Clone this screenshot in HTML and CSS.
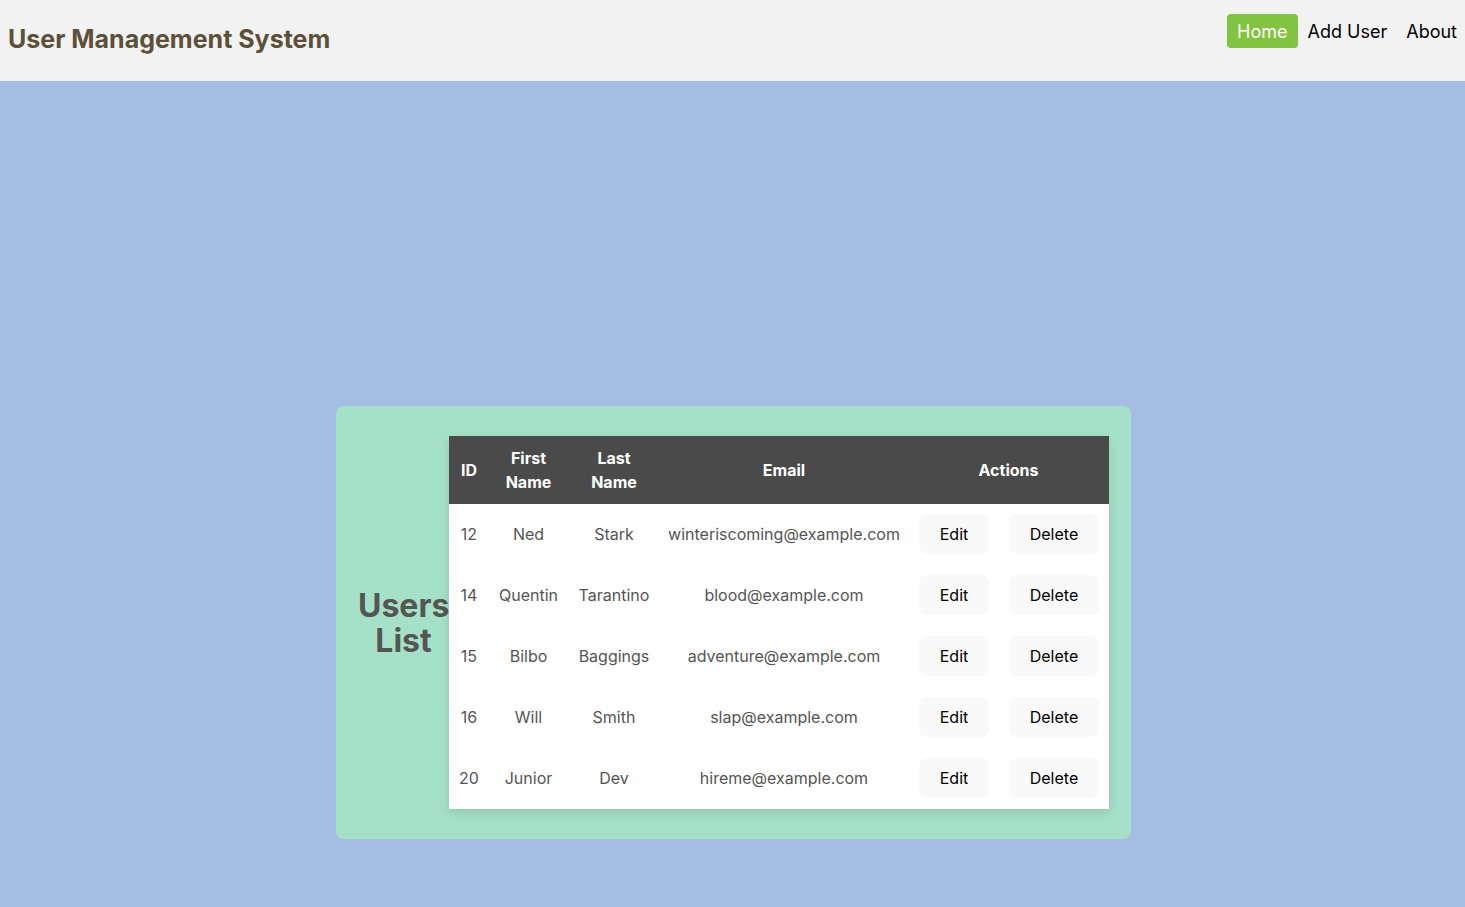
FILE: index.html
```html
<!DOCTYPE html>
<html>
<head>
<meta charset="utf-8">
<link rel="stylesheet" href="styles.css">
</head>
<body>
<header class="topbar">
  <h1 class="brand">User Management System</h1>
  <nav class="nav">
    <a class="nav-link active" href="#">Home</a>
    <a class="nav-link" href="#">Add User</a>
    <a class="nav-link" href="#">About</a>
  </nav>
</header>
<main class="main">
  <section class="card">
    <h2 class="card-title">Users<br>List</h2>
    <table class="users">
      <colgroup>
        <col class="c-id"><col class="c-first"><col class="c-last"><col class="c-email"><col class="c-edit"><col class="c-del">
      </colgroup>
      <thead>
        <tr><th>ID</th><th>First<br>Name</th><th>Last<br>Name</th><th>Email</th><th colspan="2">Actions</th></tr>
      </thead>
      <tbody>
        <tr><td>12</td><td>Ned</td><td>Stark</td><td>winteriscoming@example.com</td><td class="act act-edit"><button class="btn btn-edit">Edit</button></td><td class="act act-del"><button class="btn btn-del">Delete</button></td></tr>
        <tr><td>14</td><td>Quentin</td><td>Tarantino</td><td>blood@example.com</td><td class="act act-edit"><button class="btn btn-edit">Edit</button></td><td class="act act-del"><button class="btn btn-del">Delete</button></td></tr>
        <tr><td>15</td><td>Bilbo</td><td>Baggings</td><td>adventure@example.com</td><td class="act act-edit"><button class="btn btn-edit">Edit</button></td><td class="act act-del"><button class="btn btn-del">Delete</button></td></tr>
        <tr><td>16</td><td>Will</td><td>Smith</td><td>slap@example.com</td><td class="act act-edit"><button class="btn btn-edit">Edit</button></td><td class="act act-del"><button class="btn btn-del">Delete</button></td></tr>
        <tr><td>20</td><td>Junior</td><td>Dev</td><td>hireme@example.com</td><td class="act act-edit"><button class="btn btn-edit">Edit</button></td><td class="act act-del"><button class="btn btn-del">Delete</button></td></tr>
      </tbody>
    </table>
  </section>
</main>
</body>
</html>
```

FILE: styles.css
```css
* { box-sizing: border-box; }
html, body { margin: 0; padding: 0; }
body {
  font-family: Inter, "Noto Sans", sans-serif;
  background: #a6bde3;
  min-height: 907px;
}
.topbar {
  height: 81px;
  background: #f2f2f2;
  display: flex;
  justify-content: space-between;
  align-items: flex-start;
  padding: 0 0 0 8px;
}
.brand {
  margin: 23px 0 0 0;
  font-size: 25px;
  line-height: 32px;
  font-weight: 700;
  color: #5c5038;
}
.nav {
  display: flex;
  margin-top: 14px;
  margin-right: -2px;
}
.nav-link {
  font-size: 18px;
  line-height: 22px;
  padding: 7px 10px 5px;
  color: #000;
  text-decoration: none;
  border-radius: 4px;
}
.nav-link:last-child { padding-left: 9px; }
.nav-link.active {
  background: #82c341;
  color: #fff;
}
.main {
  display: flex;
  justify-content: center;
  padding-top: 325px;
  padding-bottom: 68px;
}
.card {
  background: #a5e1c8;
  border-radius: 8px;
  display: flex;
  align-items: center;
  padding: 30px 22px 30px 22px;
  margin-left: 2px;
}
.card-title {
  margin: 0;
  font-size: 32px;
  line-height: 35px;
  font-weight: 700;
  color: #555;
  text-align: center;
  width: 91px;
  flex: none;
  position: relative;
  z-index: 0;
}
.users {
  border-collapse: collapse;
  table-layout: fixed;
  width: 660px;
  flex: none;
  background: #fff;
  box-shadow: 0 4px 10px rgba(0,0,0,0.12);
  position: relative;
  z-index: 1;
}
.c-id { width: 40px; }
.c-first { width: 79px; }
.c-last { width: 92px; }
.c-email { width: 248px; }
.c-edit { width: 91px; }
.c-del { width: 110px; }
.users th {
  background: #4a4a4a;
  color: #fff;
  font-size: 16px;
  font-weight: 700;
  line-height: 24px;
  padding: 10px 4px;
  height: 68px;
  text-align: center;
}
.users td {
  font-size: 16px;
  line-height: 24px;
  color: #555;
  padding: 9px 4px 11px;
  height: 61px;
  text-align: center;
  white-space: nowrap;
}
.users td.act-edit { padding: 10px 10px 11px 11px; }
.users td.act-del { padding: 10px 10px 11px 10px; }
.btn {
  font-family: inherit;
  font-size: 16px;
  line-height: 24px;
  height: 40px;
  color: #000;
  background: #f9f9f9;
  border: 0;
  border-radius: 8px;
  padding: 8px 0;
  display: block;
}
.btn-edit { width: 70px; }
.btn-del { width: 90px; }
```
